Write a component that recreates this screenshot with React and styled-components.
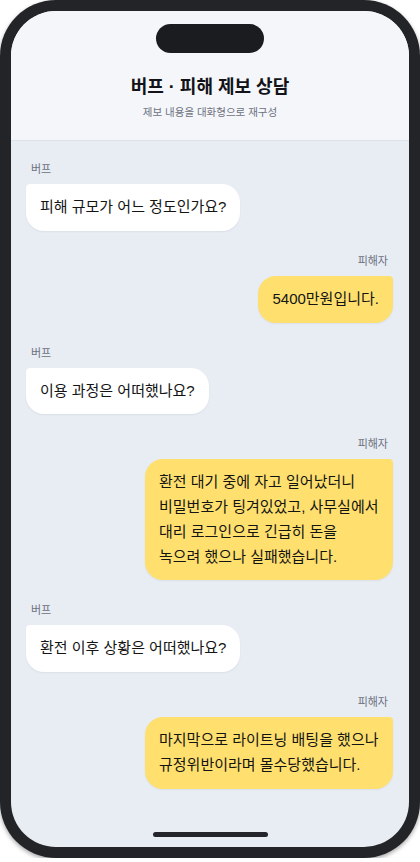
import React from "react";
import styled, { createGlobalStyle } from "styled-components";

const Global = createGlobalStyle`
  html, body { margin: 0; padding: 0; background: #ffffff; }
  body { font-family: "Liberation Sans", "Noto Sans CJK KR", sans-serif; }
  * { box-sizing: border-box; }
`;

const Phone = styled.div`
  width: 420px;
  height: 858px;
  padding: 11px;
  background: #232428;
  border-radius: 56px;
  box-shadow: 0 2px 4px rgba(0, 0, 0, 0.35);
`;

const Screen = styled.div`
  position: relative;
  height: 100%;
  border-radius: 45px;
  overflow: hidden;
  background: #e8ecf3;
  display: flex;
  flex-direction: column;
`;

const Header = styled.header`
  display: flex;
  flex-direction: column;
  align-items: center;
  padding: 13px 16px 20px;
  background: #f5f6fa;
  border-bottom: 1px solid #dde1e8;
`;

const Island = styled.div`
  width: 108px;
  height: 29px;
  border-radius: 15px;
  background: #1b1c1f;
  margin-bottom: 21px;
`;

const Title = styled.h1`
  margin: 0;
  font-size: 18px;
  line-height: 26px;
  font-weight: 700;
  color: #111318;
`;

const Subtitle = styled.p`
  margin: 4px 0 0;
  font-size: 10.5px;
  line-height: 16px;
  color: #6b7280;
`;

const Chat = styled.main`
  flex: 1;
  display: flex;
  flex-direction: column;
  gap: 22px;
  padding: 20px 16px 16px 15px;
`;

const Group = styled.div`
  display: flex;
  flex-direction: column;
  align-items: ${(p) => (p.$me ? "flex-end" : "flex-start")};
  gap: 7px;
`;

const Label = styled.span`
  padding: 0 5px;
  font-size: 11px;
  line-height: 16px;
  color: #6b7280;
`;

const Bubble = styled.div`
  max-width: 248px;
  padding: 11px 14px;
  font-size: 15px;
  line-height: 1.65;
  color: #141414;
  background: ${(p) => (p.$me ? "#ffe06f" : "#ffffff")};
  border-radius: ${(p) => (p.$me ? "18px 4px 18px 18px" : "4px 18px 18px 18px")};
  box-shadow: 0 1px 2px rgba(20, 30, 50, 0.06);
  word-break: keep-all;
`;

const HomeBar = styled.div`
  position: absolute;
  left: 50%;
  bottom: 10px;
  width: 115px;
  height: 5px;
  margin-left: -57px;
  border-radius: 3px;
  background: #23252b;
`;

const messages = [
  { me: false, who: "버프", text: "피해 규모가 어느 정도인가요?" },
  { me: true, who: "피해자", text: "5400만원입니다." },
  { me: false, who: "버프", text: "이용 과정은 어떠했나요?" },
  {
    me: true,
    who: "피해자",
    text: "환전 대기 중에 자고 일어났더니 비밀번호가 팅겨있었고, 사무실에서 대리 로그인으로 긴급히 돈을 녹으려 했으나 실패했습니다.",
  },
  { me: false, who: "버프", text: "환전 이후 상황은 어떠했나요?" },
  { me: true, who: "피해자", text: "마지막으로 라이트닝 배팅을 했으나 규정위반이라며 몰수당했습니다." },
];

export default function App() {
  return (
    <>
      <Global />
      <Phone>
        <Screen>
          <Header>
            <Island />
            <Title>버프 · 피해 제보 상담</Title>
            <Subtitle>제보 내용을 대화형으로 재구성</Subtitle>
          </Header>
          <Chat>
            {messages.map((m, i) => (
              <Group key={i} $me={m.me}>
                <Label>{m.who}</Label>
                <Bubble $me={m.me}>{m.text}</Bubble>
              </Group>
            ))}
          </Chat>
          <HomeBar />
        </Screen>
      </Phone>
    </>
  );
}
